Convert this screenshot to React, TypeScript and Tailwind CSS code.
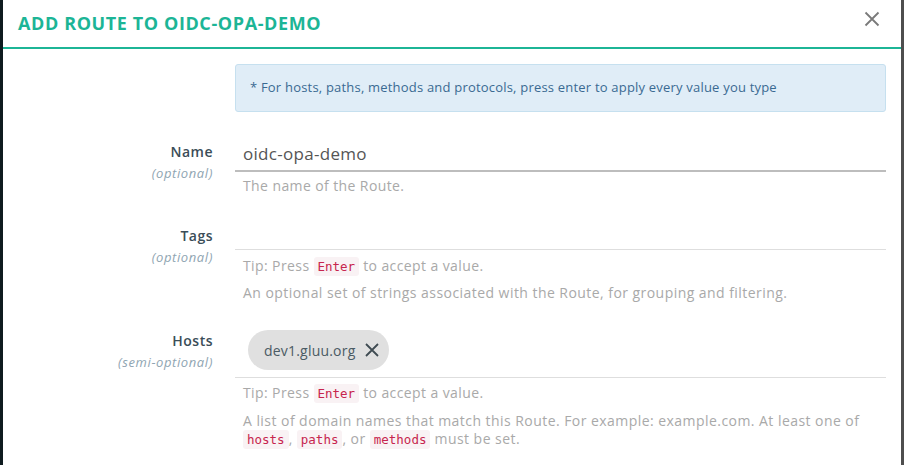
import React from "react";

const font = { fontFamily: '"Open Sans", "Liberation Sans", sans-serif' };

function Code({ children }: { children: React.ReactNode }) {
  return (
    <code className="rounded-[3px] bg-[#f9f2f4] px-[4px] py-[2px] font-['DejaVu_Sans_Mono',monospace] text-[12.5px] leading-none tracking-normal text-[#c7254e]">
      {children}
    </code>
  );
}

function Label({ name, hint }: { name: string; hint: string }) {
  return (
    <div className="pt-[4px] text-right">
      <div className="text-[14px] leading-[20px] font-semibold tracking-[0.5px] text-[#3b4d58]">{name}</div>
      <div className="mt-[2px] text-[13px] leading-[18px] italic tracking-[0.6px] text-[#8fa5b2]">{hint}</div>
    </div>
  );
}

function Tip() {
  return (
    <div className="h-[18px] pl-[8px] text-[14px] leading-[18px] tracking-[0.4px] text-[#a9a9a9]">
      Tip: Press <Code>Enter</Code> to accept a value.
    </div>
  );
}

export default function App() {
  return (
    <div className="flex h-[465px] w-[904px] overflow-hidden bg-[#0e1b1f]" style={font}>
      <div className="w-[3px] shrink-0 bg-[#0e1b1f]" />
      <div className="flex-1 bg-white">
        <div className="flex h-[49px] items-center justify-between border-b-2 border-[#1cb596] px-[15px]">
          <h1 className="text-[18px] font-bold tracking-[0.6px] text-[#1cb596]">ADD ROUTE TO OIDC-OPA-DEMO</h1>
          <svg width="16" height="16" viewBox="0 0 16 16" className="mr-[6px] mb-[10px]">
            <path d="M1.5 1.5 L14.5 14.5 M14.5 1.5 L1.5 14.5" stroke="#7a7a7a" strokeWidth="1.8" />
          </svg>
        </div>

        <div className="px-[15px]">
          <div className="grid grid-cols-[195px_1fr] gap-x-[22px]">
            <div />
            <div className="mt-[15px] flex h-[48px] items-center rounded-[3px] border border-[#c6e0ef] bg-[#e0edf7] px-[14px] text-[13px] tracking-[0.2px] text-[#3a6a92]">
              * For hosts, paths, methods and protocols, press enter to apply every value you type
            </div>

            <div className="mt-[26px]">
              <Label name="Name" hint="(optional)" />
            </div>
            <div className="mt-[26px]">
              <div className="flex h-[34px] items-center border-b-2 border-[#bdbdbd] pl-[8px] text-[17px] tracking-[0.3px] text-[#555]">
                oidc-opa-demo
              </div>
              <div className="mt-[5px] pl-[8px] text-[14px] leading-[18px] tracking-[0.4px] text-[#a9a9a9]">The name of the Route.</div>
            </div>

            <div className="mt-[27px]">
              <Label name="Tags" hint="(optional)" />
            </div>
            <div className="mt-[27px]">
              <div className="h-[28px] border-b border-[#dedede]" />
              <div className="mt-[7px]">
                <Tip />
              </div>
              <div className="mt-[9px] pl-[8px] text-[14px] leading-[18px] tracking-[0.45px] text-[#a9a9a9]">
                An optional set of strings associated with the Route, for grouping and filtering.
              </div>
            </div>

            <div className="mt-[25px]">
              <Label name="Hosts" hint="(semi-optional)" />
            </div>
            <div className="mt-[25px]">
              <div className="flex border-b border-[#dedede] pt-[3px] pb-[7px] pl-[13px]">
                <span className="flex h-[40px] items-center gap-[9px] rounded-full bg-[#e0e0e0] pr-[9px] pl-[16px] text-[14px] tracking-[0.2px] text-[#4b5b64]">
                  dev1.gluu.org
                  <svg width="16" height="16" viewBox="0 0 16 16">
                    <path d="M2 2 L14 14 M14 2 L2 14" stroke="#3f4b52" strokeWidth="1.8" />
                  </svg>
                </span>
              </div>
              <div className="mt-[6px]">
                <Tip />
              </div>
              <div className="mt-[10px] pl-[8px] text-[14px] leading-[18px] tracking-[0.45px] text-[#a9a9a9]">
                A list of domain names that match this Route. For example: example.com. At least one of
                <br />
                <Code>hosts</Code>, <Code>paths</Code>, or <Code>methods</Code> must be set.
              </div>
            </div>
          </div>
        </div>
      </div>
      <div className="w-[3px] shrink-0 bg-[#4e4e4e]" />
    </div>
  );
}
